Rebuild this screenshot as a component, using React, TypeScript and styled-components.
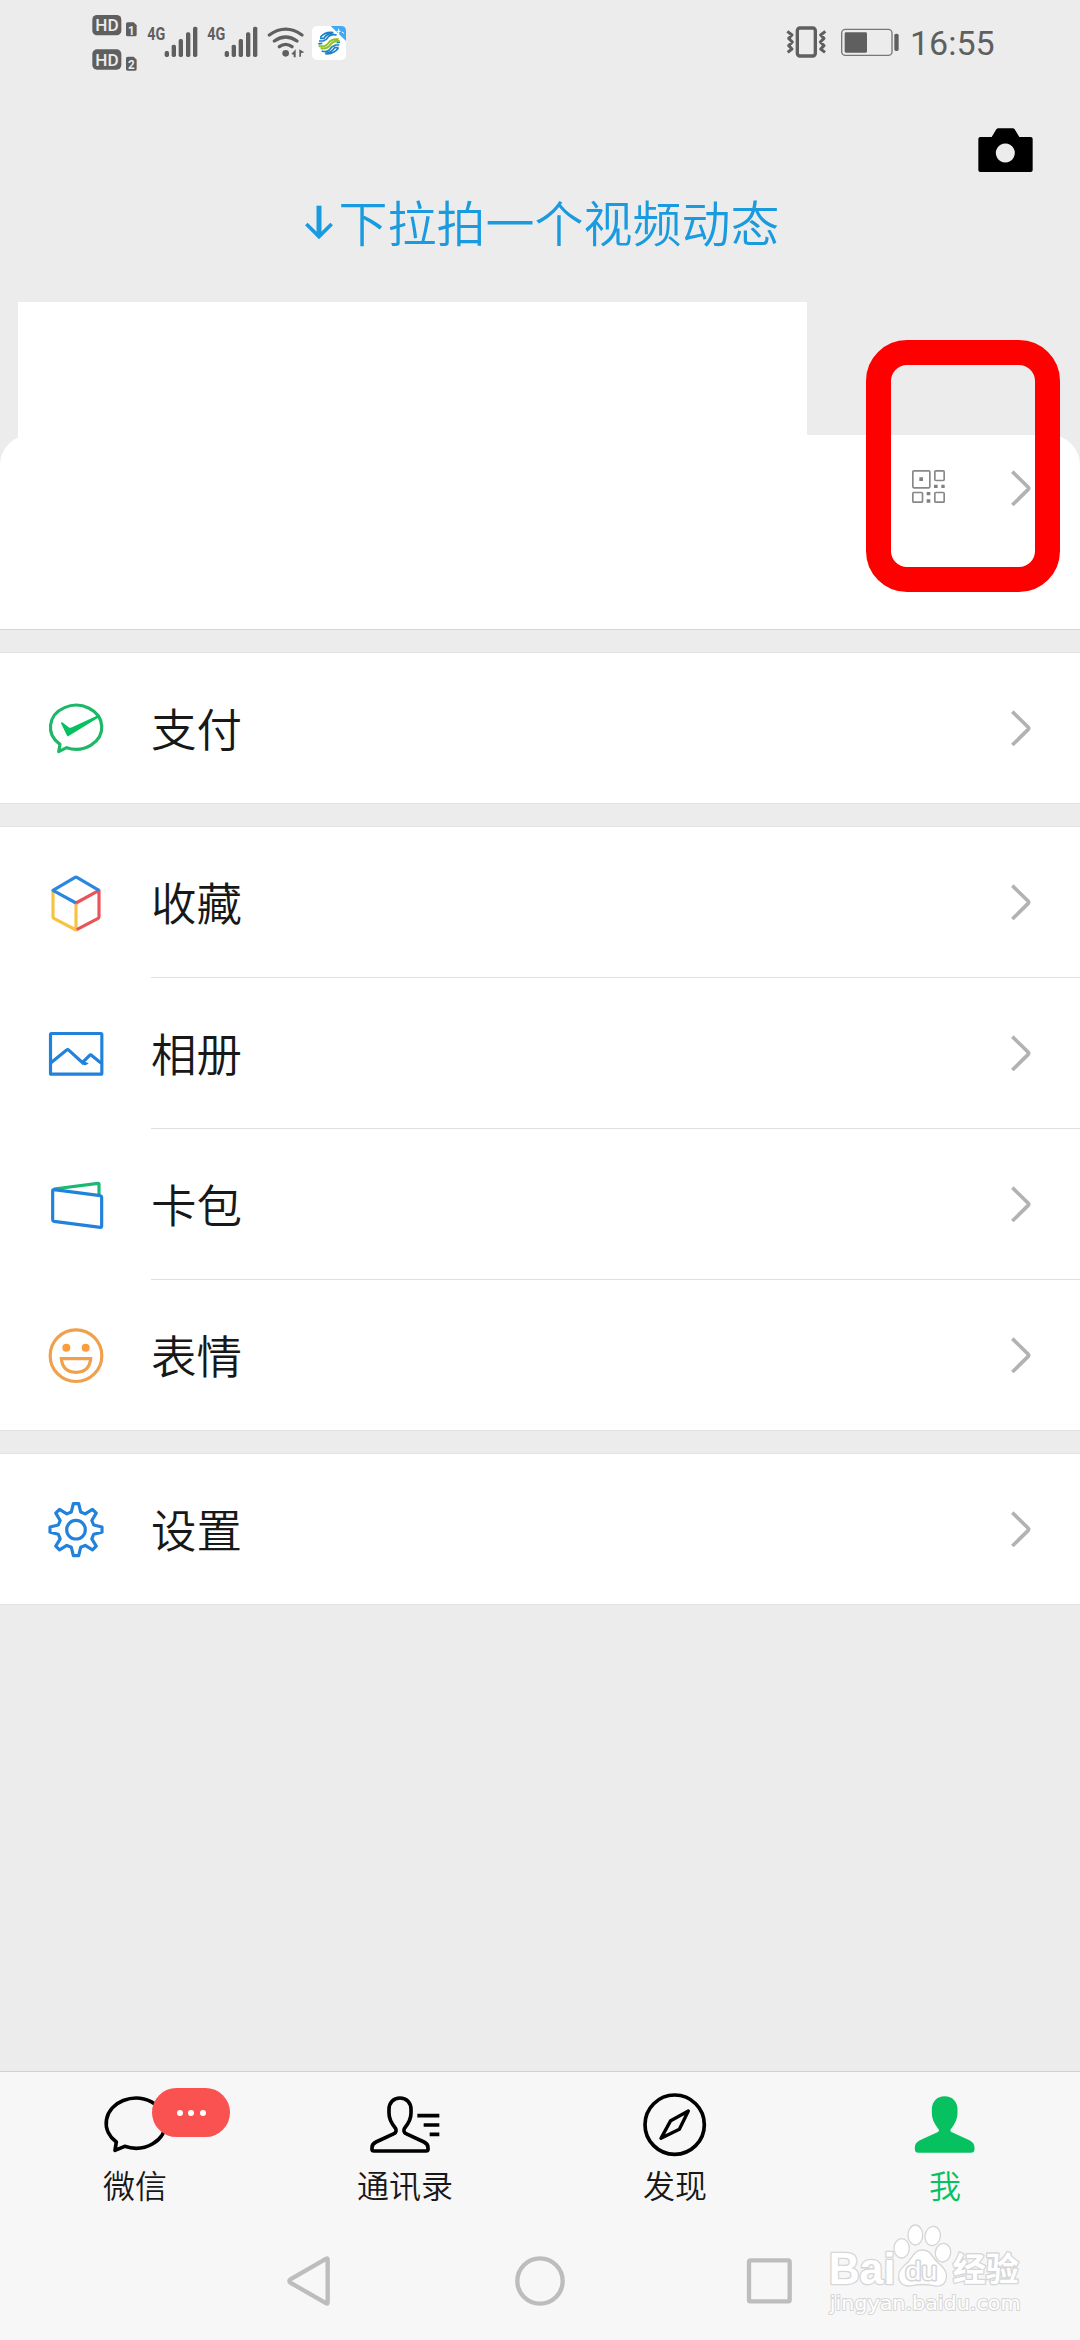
import React from 'react';
import styled, { createGlobalStyle } from 'styled-components';

const GlobalStyle = createGlobalStyle`
  * { box-sizing: border-box; }
  body { margin: 0; background: #ececec; }
`;

const ink = '#5f5f5f';
const blue = '#2182dc';
const green = '#07c160';

const Screen = styled.div`
  position: relative;
  display: flex;
  flex-direction: column;
  width: 1080px;
  height: 2340px;
  overflow: hidden;
  background: #ececec;
  font-family: 'Noto Sans CJK SC', 'Noto Sans', sans-serif;
  font-weight: 350;
  color: #181818;
  svg { display: block; flex: none; }
`;

const StatusBar = styled.div`
  display: flex;
  justify-content: space-between;
  height: 88px;
  padding: 0 88px 0 92px;
`;

const StatusGroup = styled.div<{ $gap: number }>`
  display: flex;
  align-items: flex-start;
  gap: ${(p) => p.$gap}px;
`;

const Clock = styled.span`
  font: 400 34px/40px Roboto, sans-serif;
  color: ${ink};
  padding-top: 23px;
  margin-left: -3px;
  width: 82px;
  white-space: nowrap;
`;

const Header = styled.header`
  display: flex;
  flex-direction: column;
  height: 214px;
  padding: 40px 47px 0;
`;

const CameraButton = styled.div`
  align-self: flex-end;
`;

const Hint = styled.div`
  display: flex;
  justify-content: center;
  align-items: center;
  gap: 5px;
  height: 60px;
  margin-top: 19px;
  padding-left: 5px;
  font-size: 49px;
  line-height: 60px;
  color: #1a9be0;
`;

const Cover = styled.div`
  width: 789px;
  height: 164px;
  margin: 0 0 -31px 18px;
  background: #fff;
  flex: none;
`;

const Profile = styled.section`
  display: flex;
  justify-content: flex-end;
  align-items: flex-start;
  gap: 66px;
  height: 195px;
  padding: 35px 49px 0;
  border-bottom: 1px solid #d5d5d5;
  border-radius: 30px 30px 0 0;
  background: #fff;
  flex: none;
`;

const Highlight = styled.div`
  position: absolute;
  left: 866px;
  top: 340px;
  width: 194px;
  height: 252px;
  border: 25px solid #f00;
  border-radius: 41px;
`;

const Group = styled.section`
  margin-top: 22px;
  border-top: 1px solid #e2e2e2;
  border-bottom: 1px solid #e2e2e2;
  background: #fff;
`;

const Row = styled.div`
  display: flex;
  align-items: center;
  height: 150px;
  padding: 0 49px 0 46px;
`;

const Divider = styled.div`
  height: 1px;
  margin-left: 151px;
  background: #e0e0e0;
`;

const RowLabel = styled.span`
  flex: 1;
  margin-left: 45px;
  font-size: 45.5px;
  line-height: 60px;
  padding-bottom: 2px;
`;

const Bottom = styled.footer`
  margin-top: auto;
  height: 269px;
  border-top: 1px solid #d1d1d1;
  background: #f7f7f7;
`;

const Tabs = styled.nav`
  display: grid;
  grid-template-columns: repeat(4, 1fr);
  height: 150px;
`;

const Tab = styled.div<{ $active?: boolean }>`
  position: relative;
  display: flex;
  flex-direction: column;
  align-items: center;
  padding-top: 18px;
  color: ${(p) => (p.$active ? green : '#181818')};
`;

const TabLabel = styled.span`
  margin-top: 4px;
  font-size: 32px;
  line-height: 40px;
`;

const Badge = styled.div`
  position: absolute;
  left: 152px;
  top: 16px;
  display: flex;
  justify-content: center;
  align-items: center;
  gap: 5.5px;
  width: 78px;
  height: 49px;
  border-radius: 25px;
  background: #fa5151;
`;

const Dot = styled.i`
  width: 6px;
  height: 6px;
  border-radius: 50%;
  background: #fff;
`;

const SystemNav = styled.div`
  display: flex;
  justify-content: center;
  align-items: center;
  gap: 180px;
  height: 118px;
`;

const Watermark = styled.svg`
  position: absolute;
  left: 820px;
  top: 2220px;
`;

const HdIcon = () => (
  <svg width="46" height="80" viewBox="36 0 138 240" fontFamily="Roboto" fontWeight="700" fill="#ececec">
    {[0, 103].map((dy, i) => (
      <g key={dy} transform={`translate(0 ${dy})`}>
        <rect x="37" y="45" width="87" height="61" rx="14" fill={ink} />
        <text x="46" y="94" fontSize="51" fontWeight="500" textLength="70" lengthAdjust="spacingAndGlyphs">HD</text>
        <path d="M143 67h18l9 9v28q0 5-5 5h-22q-5 0-5-5v-32q0-5 5-5z" fill={ink} />
        <text x="144" y="104" fontSize="41" textLength="20" lengthAdjust="spacingAndGlyphs">{i + 1}</text>
      </g>
    ))}
  </svg>
);

const SignalIcon = () => (
  <svg width="51" height="80" viewBox="201 0 153 240" fill={ink}>
    <text x="202" y="121" fontFamily="Roboto" fontWeight="700" fontSize="57" textLength="54" lengthAdjust="spacingAndGlyphs">4G</text>
    <rect x="254" y="153" width="13" height="18" rx="5" />
    <rect x="275" y="134" width="13" height="37" rx="5" />
    <rect x="296" y="117" width="13" height="54" rx="5" />
    <rect x="318" y="97" width="13" height="74" rx="5" />
    <rect x="339" y="80" width="13" height="91" rx="5" />
  </svg>
);

const WifiIcon = () => (
  <svg width="38" height="80" viewBox="561 0 114 240" fill="none" stroke={ink} strokeWidth="10" strokeLinecap="round">
    <path d="M568 105Q617 70 666 105M583 123Q617 99 651 123M598 140Q617 126 636 140" />
    <circle cx="617" cy="160" r="10" fill={ink} stroke="none" />
    <path d="M634 162l13-14v24h-6v-8zM658 148l15 9-10 3v10h-5z" fill={ink} stroke="none" />
  </svg>
);

const CarrierSvg = styled.svg`
  margin-left: -2px;
`;

const CarrierIcon = () => (
  <CarrierSvg width="34" height="80" viewBox="696 0 102 240" fill="none">
    <rect x="696" y="78" width="102" height="102" rx="15" fill="#fff" />
    <path d="M752 78h31q15 0 15 15v30z" fill="#3fa9f5" />
    <path d="M776 86v16M770 94h12M786 96l6 4" stroke="#fff" strokeWidth="3" />
    <g stroke="#1b80c4" strokeWidth="5">
      <path d="M721 112Q736 94 760 98Q738 102 732 115H720M717 123H730Q740 120 746 109Q754 101 770 105M715 132Q718 130 727 130" />
      <path d="M775 145Q760 164 736 161Q757 156 764 143H776M778 135H768Q755 138 749 149Q741 158 725 153M780 127Q777 128 770 128" />
    </g>
    <path d="M716 138Q737 142 746 128Q755 115 776 118M722 145Q742 148 752 133Q760 122 779 123" stroke="#8fc31f" strokeWidth="6" />
  </CarrierSvg>
);

const VibrateIcon = () => (
  <svg width="41" height="80" viewBox="48 0 123 240" fill="none" stroke={ink}>
    <rect x="82" y="84" width="54" height="84" rx="8" strokeWidth="10" />
    <path
      d="M52 94l14 11-10 10 11 11-11 11 10 10-13 10M166 94l-14 11 10 10-11 11 11 11-10 10 13 10"
      strokeWidth="9"
      strokeLinejoin="round"
    />
  </svg>
);

const BatteryIcon = () => (
  <svg width="58" height="80" viewBox="213 0 174 240">
    <rect x="215" y="88" width="151" height="78" rx="11" fill="none" stroke="#777" strokeWidth="4" />
    <rect x="224" y="97" width="67" height="61" rx="4" fill={ink} />
    <rect x="373" y="101" width="13" height="52" rx="5" fill={ink} />
  </svg>
);

const CameraIcon = () => (
  <svg width="55" height="44" viewBox="0 0 165 132">
    <path
      fillRule="evenodd"
      d="M62 1h42q4 0 6 3l14 23h34q6 0 6 6v93q0 6-6 6H7q-6 0-6-6V33q0-6 6-6h34L55 4q2-3 7-3zM82 46.500a28.500 28.500 0 1 0 .01 0z"
    />
  </svg>
);

const DownArrow = () => (
  <svg width="28" height="50" viewBox="0 0 84 150" fill="none" stroke="#1a9be0">
    <path d="M42 29v92" strokeWidth="15" />
    <path d="M4 84l38 38 38-38" strokeWidth="11" />
  </svg>
);

const QrIcon = () => (
  <svg width="33" height="33" viewBox="0 0 99 99" fill="none" stroke="#888" strokeWidth="5">
    <rect x="2.500" y="2.500" width="51" height="51" rx="3" />
    <rect x="68.500" y="2.500" width="28" height="29" rx="3" />
    <rect x="2.500" y="67.500" width="29" height="29" rx="3" />
    <rect x="68.500" y="67.500" width="28" height="29" rx="3" />
    <path d="M22 22h11v11H22zM66 44h11v10H66zM88 44h10v10H88zM44 66h11v10H44zM44 88h11v10H44z" fill="#808080" stroke="none" />
  </svg>
);

const Chevron = () => (
  <svg width="20" height="36" viewBox="0 0 60 108" fill="none" stroke="#b2b2b2" strokeWidth="11">
    <path d="M4 5l47 46q4 4 0 8L4 105" />
  </svg>
);

const RowIcon = ({ children }: { children: React.ReactNode }) => (
  <svg width="60" height="60" viewBox="0 0 180 180" fill="none" strokeWidth="9.500" strokeLinejoin="round">
    {children}
  </svg>
);

const PayIcon = () => (
  <RowIcon>
    <path d="M62 149L38 161L42 139A77 66 0 1 1 62 149Z" stroke="#1db768" />
    <path d="M45 76Q44 71 51 74L70 89Q74 90 78 88L156 52L159 58L69 113Q65 117 62 111Z" fill={green} />
  </RowIcon>
);

const CubeIcon = () => (
  <RowIcon>
    <path d="M90 93V174L25 140Q21 138 21 134V57" stroke="#f8c243" />
    <path d="M92 173L155 140Q159 138 159 134V55L90 93" stroke="#ea5458" />
    <path d="M90 93L21 55L86 17Q90 14 94 17L159 55" stroke="#2b86df" />
  </RowIcon>
);

const AlbumIcon = () => (
  <RowIcon>
    <g stroke={blue}>
      <rect x="13.500" y="31.500" width="154" height="122" rx="3" />
      <path d="M14 120L61 82Q65 78 69 82L114 123M109 119L130 98Q134 94 138 98L166 121" />
    </g>
    <path d="M106 112L128 121Q123 128 113 126z" fill={blue} />
  </RowIcon>
);

const CardIcon = () => (
  <RowIcon>
    <path d="M24 45L156 28Q159 28 159 31V64" stroke="#19b873" />
    <path d="M24 47L163 65Q167 66 167 70V156Q167 160 163 160L24 142Q20 141 20 137V51Q20 47 24 47Z" stroke={blue} />
  </RowIcon>
);

const SmileIcon = () => (
  <RowIcon>
    <g stroke="#f0a04b">
      <circle cx="90" cy="92" r="77.500" />
      <path d="M46 101H134Q130 142 90 142Q50 142 46 101Z" strokeLinejoin="miter" />
    </g>
    <circle cx="61" cy="68" r="12" fill="#fa9d3b" />
    <circle cx="119" cy="68" r="12" fill="#fa9d3b" />
  </RowIcon>
);

const gearPoints = Array.from({ length: 8 }, (_, i) => {
  const a = (i * Math.PI) / 4;
  return [[-14, -53], [-8, -78], [8, -78], [14, -53]]
    .map(([x, y]) => `${90 + x * Math.cos(a) - y * Math.sin(a)},${92 + x * Math.sin(a) + y * Math.cos(a)}`)
    .join(' ');
}).join(' ');

const GearIcon = () => (
  <RowIcon>
    <polygon points={gearPoints} stroke={blue} />
    <circle cx="90" cy="92" r="28" stroke={blue} />
  </RowIcon>
);

const TabIcon = ({ children }: { children: React.ReactNode }) => (
  <svg width="70" height="70" viewBox="0 0 210 210" fill="none" stroke="#000" strokeWidth="11" strokeLinejoin="round">
    {children}
  </svg>
);

const person =
  'M90 24C70 24 57 38 57 58V70C57 92 68 104 76 114C80 120 79 127 72 131L18 156C10 160 6 166 6 173V178Q6 183 12 183H168Q174 183 174 178V173C174 166 170 160 162 156L108 131C101 127 100 120 104 114C112 104 123 92 123 70V58C123 38 110 24 90 24Z';

const Item = ({ icon, label }: { icon: React.ReactNode; label: string }) => (
  <Row>
    {icon}
    <RowLabel>{label}</RowLabel>
    <Chevron />
  </Row>
);

export default function App() {
  return (
    <Screen>
      <GlobalStyle />
      <StatusBar>
        <StatusGroup $gap={9}>
          <HdIcon />
          <SignalIcon />
          <SignalIcon />
          <WifiIcon />
          <CarrierIcon />
        </StatusGroup>
        <StatusGroup $gap={14}>
          <VibrateIcon />
          <BatteryIcon />
          <Clock>16:55</Clock>
        </StatusGroup>
      </StatusBar>
      <Header>
        <CameraButton><CameraIcon /></CameraButton>
        <Hint><DownArrow /><span>下拉拍一个视频动态</span></Hint>
      </Header>
      <Cover />
      <Profile><QrIcon /><Chevron /></Profile>
      <Group><Item icon={<PayIcon />} label="支付" /></Group>
      <Group>
        <Item icon={<CubeIcon />} label="收藏" />
        <Divider />
        <Item icon={<AlbumIcon />} label="相册" />
        <Divider />
        <Item icon={<CardIcon />} label="卡包" />
        <Divider />
        <Item icon={<SmileIcon />} label="表情" />
      </Group>
      <Group><Item icon={<GearIcon />} label="设置" /></Group>
      <Bottom>
        <Tabs>
          <Tab>
            <TabIcon><path d="M74 169L45 181L49 156A89 75 0 1 1 74 169Z" /></TabIcon>
            <TabLabel>微信</TabLabel>
            <Badge><Dot /><Dot /><Dot /></Badge>
          </Tab>
          <Tab>
            <TabIcon>
              <path d={person} />
              <path d="M142 77H208M161 105H208M179 133H208" />
            </TabIcon>
            <TabLabel>通讯录</TabLabel>
          </Tab>
          <Tab>
            <TabIcon>
              <circle cx="104" cy="104" r="89" />
              <path d="M145 63L92 92L63 145L118 118Z" strokeWidth="10" />
            </TabIcon>
            <TabLabel>发现</TabLabel>
          </Tab>
          <Tab $active>
            <TabIcon><path d={person} transform="translate(14 0)" fill={green} stroke={green} /></TabIcon>
            <TabLabel>我</TabLabel>
          </Tab>
        </Tabs>
        <SystemNav>
          <svg width="50" height="50" viewBox="0 0 150 150" fill="none" stroke="#bdbdbd" strokeWidth="13" strokeLinejoin="round">
            <path d="M16 70L124 8Q128 6 128 11V139Q128 144 124 142L16 80Q10 75 16 70Z" />
          </svg>
          <svg width="50" height="50" viewBox="0 0 150 150" fill="none" stroke="#bdbdbd" strokeWidth="13">
            <circle cx="75" cy="75" r="68" />
          </svg>
          <svg width="50" height="50" viewBox="0 0 150 150" fill="none" stroke="#bdbdbd" strokeWidth="13">
            <rect x="12" y="13" width="122" height="123" rx="5" />
          </svg>
        </SystemNav>
      </Bottom>
      <Highlight />
      <Watermark width="210" height="110" viewBox="120 480 630 330" fill="#fff" stroke="#d6d6d6" strokeWidth="8" strokeLinejoin="round" paintOrder="stroke">
        <text x="146" y="673" fontFamily="Liberation Sans" fontWeight="700" fontSize="131" textLength="200" lengthAdjust="spacingAndGlyphs">Bai</text>
        <ellipse cx="365" cy="565" rx="21" ry="27" />
        <ellipse cx="406" cy="525" rx="20" ry="28" />
        <ellipse cx="458" cy="528" rx="21" ry="27" transform="rotate(10 458 528)" />
        <ellipse cx="489" cy="578" rx="21" ry="26" transform="rotate(10 489 578)" />
        <path d="M427 572C452 572 454 594 474 611C492 625 499 638 497 653C494 674 478 679 460 675Q428 668 396 675C374 679 360 670 358 652C356 636 366 625 381 612C400 595 402 572 427 572Z" />
        <text x="376" y="660" fontFamily="Liberation Sans" fontSize="80" strokeWidth="9" textLength="96" lengthAdjust="spacingAndGlyphs">du</text>
        <text x="518" y="664" fontFamily="Noto Sans CJK SC" fontWeight="700" fontSize="99" textLength="198" lengthAdjust="spacingAndGlyphs">经验</text>
        <text x="149" y="751" fontFamily="DejaVu Sans" fontWeight="400" fontSize="60" strokeWidth="6" textLength="573" lengthAdjust="spacingAndGlyphs">jingyan.baidu.com</text>
      </Watermark>
    </Screen>
  );
}
